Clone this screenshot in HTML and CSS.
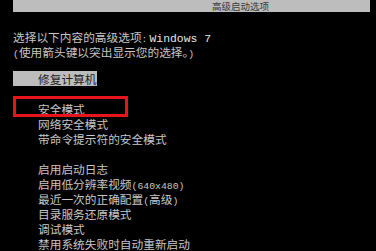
FILE: index.html
```html
<!DOCTYPE html>
<html lang="zh-CN">
<head>
<meta charset="utf-8">
<title>高级启动选项</title>
<link rel="stylesheet" href="styles.css">
</head>
<body>
<div class="titlebar"><span class="title">高级启动选项</span></div>
<div class="main">
  <div class="prompt">
    <div class="line">选择以下内容的高级选项<span class="lat">:</span><span class="lat win">Windows 7</span></div>
    <div class="line"><span class="lat">(</span>使用箭头键以突出显示您的选择。<span class="lat">)</span></div>
  </div>
  <div class="repair"><span class="repair-text">修复计算机</span></div>
  <ul class="options">
    <li class="opt"><span class="selected">安全模式</span></li>
    <li class="opt">网络安全模式</li>
    <li class="opt">带命令提示符的安全模式</li>
    <li class="opt gap">启用启动日志</li>
    <li class="opt">启用低分辨率视频<span class="lat">(640x480)</span></li>
    <li class="opt">最近一次的正确配置<span class="lat">(</span>高级<span class="lat">)</span></li>
    <li class="opt">目录服务还原模式</li>
    <li class="opt">调试模式</li>
    <li class="opt">禁用系统失败时自动重新启动</li>
  </ul>
</div>
</body>
</html>
```
FILE: styles.css
```css
html, body {
  margin: 0;
  padding: 0;
  background: #000;
  height: 100%;
  overflow: hidden;
}
body {
  font-family: "Noto Sans CJK SC", "Liberation Mono", monospace;
  font-size: 11.7px;
  color: #c6c6c6;
}
.titlebar {
  margin-left: 13px;
  width: 357px;
  height: 12px;
  background: #bdbdbd;
  line-height: 12px;
}
.title {
  display: block;
  padding-left: 199px;
  font-size: 9.5px;
  color: #3a3a3a;
}
.main {
  padding-left: 13px;
}
.prompt {
  margin-top: 17px;
}
.line {
  line-height: 15px;
  height: 15px;
  white-space: nowrap;
}
.lat {
  font-family: "Liberation Mono", monospace;
  font-size: 9.8px;
}
.win {
  margin-left: 2px;
  font-size: 11.4px;
  color: #e4e4e4;
}
.repair {
  margin-top: 12px;
  height: 15px;
  line-height: 15px;
}
.repair-text {
  display: inline-block;
  padding-left: 25px;
  padding-right: 1px;
  background: #bdbdbd;
  color: #1e1e1e;
}
.options {
  list-style: none;
  margin: 15px 0 0 0;
  padding: 0 0 0 25px;
}
.opt {
  line-height: 15px;
  height: 15px;
  white-space: nowrap;
}
.opt.gap {
  margin-top: 15px;
}
.selected {
  position: relative;
  display: inline-block;
  height: 15px;
  line-height: 15px;
  vertical-align: top;
}
.selected::after {
  content: "";
  position: absolute;
  left: -25px;
  top: -5px;
  width: 109px;
  height: 15px;
  border: 3px solid #e8141c;
}
```
